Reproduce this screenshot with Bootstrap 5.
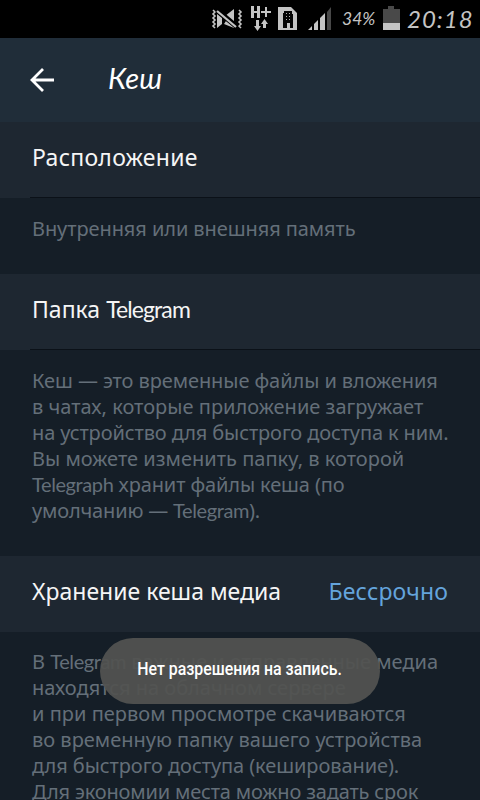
<!DOCTYPE html>
<html lang="ru">
<head>
<meta charset="utf-8">
<meta name="viewport" content="width=device-width, initial-scale=1">
<title>Кеш</title>
<link href="https://cdn.jsdelivr.net/npm/bootstrap@5.3.0/dist/css/bootstrap.min.css" rel="stylesheet">
<style>
body{background:#151e27;font-family:"Noto Sans","Open Sans",sans-serif;height:800px;overflow:hidden}
.screen{width:480px;height:800px;overflow:hidden}
.status-strip{height:38px;background:#000;color:#c4c4c4;padding-left:210px}
.hand{font-family:"Lato","Noto Sans",sans-serif;font-style:italic}
.pct{font-size:17.5px;line-height:38px;width:36px;margin-left:10px}
.clock{font-size:24px;line-height:36px;letter-spacing:1px;margin-left:7px}
.topbar{height:84px;background:#202d39;padding-left:29px}
.topbar h1{font-size:29px;font-weight:400;line-height:80px;height:84px;color:#fff;margin-left:53px;letter-spacing:.2px}
.setting{height:76px;background:#1e2731;color:#f5f5f5;font-size:23px;line-height:71px;padding:0 32px}
.setting.ruled{background:linear-gradient(#0b1118,#0b1118) 30px 75px/450px 1px no-repeat,#1e2731}
.value{color:#64a4dc;letter-spacing:.2px;margin-right:-.2px}
.hint{color:#646f79;font-size:20px;line-height:26px;padding:18px 0 0 32px}
.hint-short{height:76px}
.hint-long{height:206px}
.hint-last{padding-top:17px;margin-top:-1px;padding-top:18px}
.ln{display:block;white-space:pre;width:max-content;height:26px}
.lat{font-family:"Lato",sans-serif;line-height:1}
.setting .lat{letter-spacing:-.9px}
.hint .lat{letter-spacing:-.4px}
.wide{letter-spacing:.26px}
.t1{letter-spacing:-.08px}.t2{letter-spacing:-.12px}.t3{letter-spacing:-.17px}.w1{letter-spacing:.02px}
.toast-pill{left:100px;top:638px;width:280px;height:66px;background:rgba(82,83,81,.94);color:#fff;font:500 19px/61px Roboto,sans-serif}
.toast-pill span{display:inline-block;transform:scaleX(.835);white-space:nowrap}
</style>
<script src="https://cdn.jsdelivr.net/npm/bootstrap@5.3.0/dist/js/bootstrap.bundle.min.js"></script>
</head>
<body>
<main class="screen position-relative">
<header class="status-strip d-flex align-items-center">
<svg class="flex-shrink-0" width="122" height="38" viewBox="210 0 122 38" fill="#c4c4c4">
<!-- muted with vibration -->
<g fill="none" stroke="#c4c4c4" stroke-width="1.6"><path d="M213 10l2 2-2 2 2 2-2 2 2 2-2 2 2 2-2 2 2 2"/><path d="M239 10l2 2-2 2 2 2-2 2 2 2-2 2 2 2-2 2 2 2"/></g>
<path d="M217 14l5 4v6l-5 4zM225 16l9-7v14zM224 24l10 4v-1l-8-6z"/>
<path d="M217 10l20 17" stroke="#000" stroke-width="5"/><path d="M217 11l19 16" stroke="#c4c4c4" stroke-width="2.200"/>
<!-- HSPA+ with traffic arrows -->
<path d="M251 6h3v5h3V6h3v12h-3v-5h-3v5h-3zM265 7h2v4h4v2h-4v4h-2v-4h-4v-2h4z"/>
<path d="M256 20h3v6h2l-3.500 5-3.500-5h2zM263 28v-4h-2l3.500-5 3.500 5h-2v4z"/>
<!-- SIM with office building -->
<path d="M278 7h13l6 6v17h-19z"/>
<path fill="#050505" d="M284 11h8v3h1v14h-3v-5h-3v5h-4V13h1z"/>
<g fill="#b0b0b0"><path d="M286 13h1v1h-1zM289 13h1v1h-1zM286 16h1v1h-1zM289 16h1v1h-1zM286 19h1v1h-1zM289 19h1v1h-1z"/></g>
<!-- signal -->
<path d="M308 30l4-4v4zM314 24l4-4v10h-4zM320 18l5-5v17h-5z"/><path fill="#484848" d="M327 12l4-5v23h-4z"/>
</svg>
<span class="hand pct">34%</span>
<svg class="flex-shrink-0 ms-1" width="18" height="38"><path fill="#494949" d="M6 6h6v3h6v14H1V9h5z"/><path fill="#c4c4c4" d="M1 23h17v7H1z"/></svg>
<span class="hand clock">20:18</span>
</header>
<nav class="topbar d-flex align-items-center">
<svg width="26" height="26" viewBox="29 67 26 26" fill="none" stroke="#fff" stroke-width="2.800"><path d="M54 80H32M43 69L32 80l11 11"/></svg>
<h1 class="hand mb-0">Кеш</h1>
</nav>
<section class="setting ruled"><span class="wide">Расположение</span></section>
<div class="hint hint-short"><span class="ln t1">Внутренняя или внешняя память</span></div>
<section class="setting ruled"><span>Папка</span> <span class="lat">Telegram</span></section>
<div class="hint hint-long">
<span class="ln t1">Кеш — это временные файлы и вложения</span>
<span class="ln w1">в чатах, которые приложение загружает</span>
<span class="ln t2">на устройство для быстрого доступа к ним.</span>
<span class="ln w1">Вы можете изменить папку, в которой</span>
<span class="ln t2"><span class="lat">Telegraph</span> хранит файлы кеша (по</span>
<span class="ln t3">умолчанию — <span class="lat">Telegram</span>).</span>
</div>
<section class="setting d-flex justify-content-between"><span>Хранение кеша медиа</span><span class="value">Бессрочно</span></section>
<div class="hint hint-last">
<span class="ln">В <span class="lat">Telegram</span> важные и отправленные медиа</span>
<span class="ln">находятся на облачном сервере</span>
<span class="ln w1">и при первом просмотре скачиваются</span>
<span class="ln">во временную папку вашего устройства</span>
<span class="ln t1">для быстрого доступа (кеширование).</span>
<span class="ln t3">Для экономии места можно задать срок</span>
</div>
<div class="toast-pill position-absolute text-center rounded-pill"><span>Нет разрешения на запись.</span></div>
</main>
</body>
</html>
